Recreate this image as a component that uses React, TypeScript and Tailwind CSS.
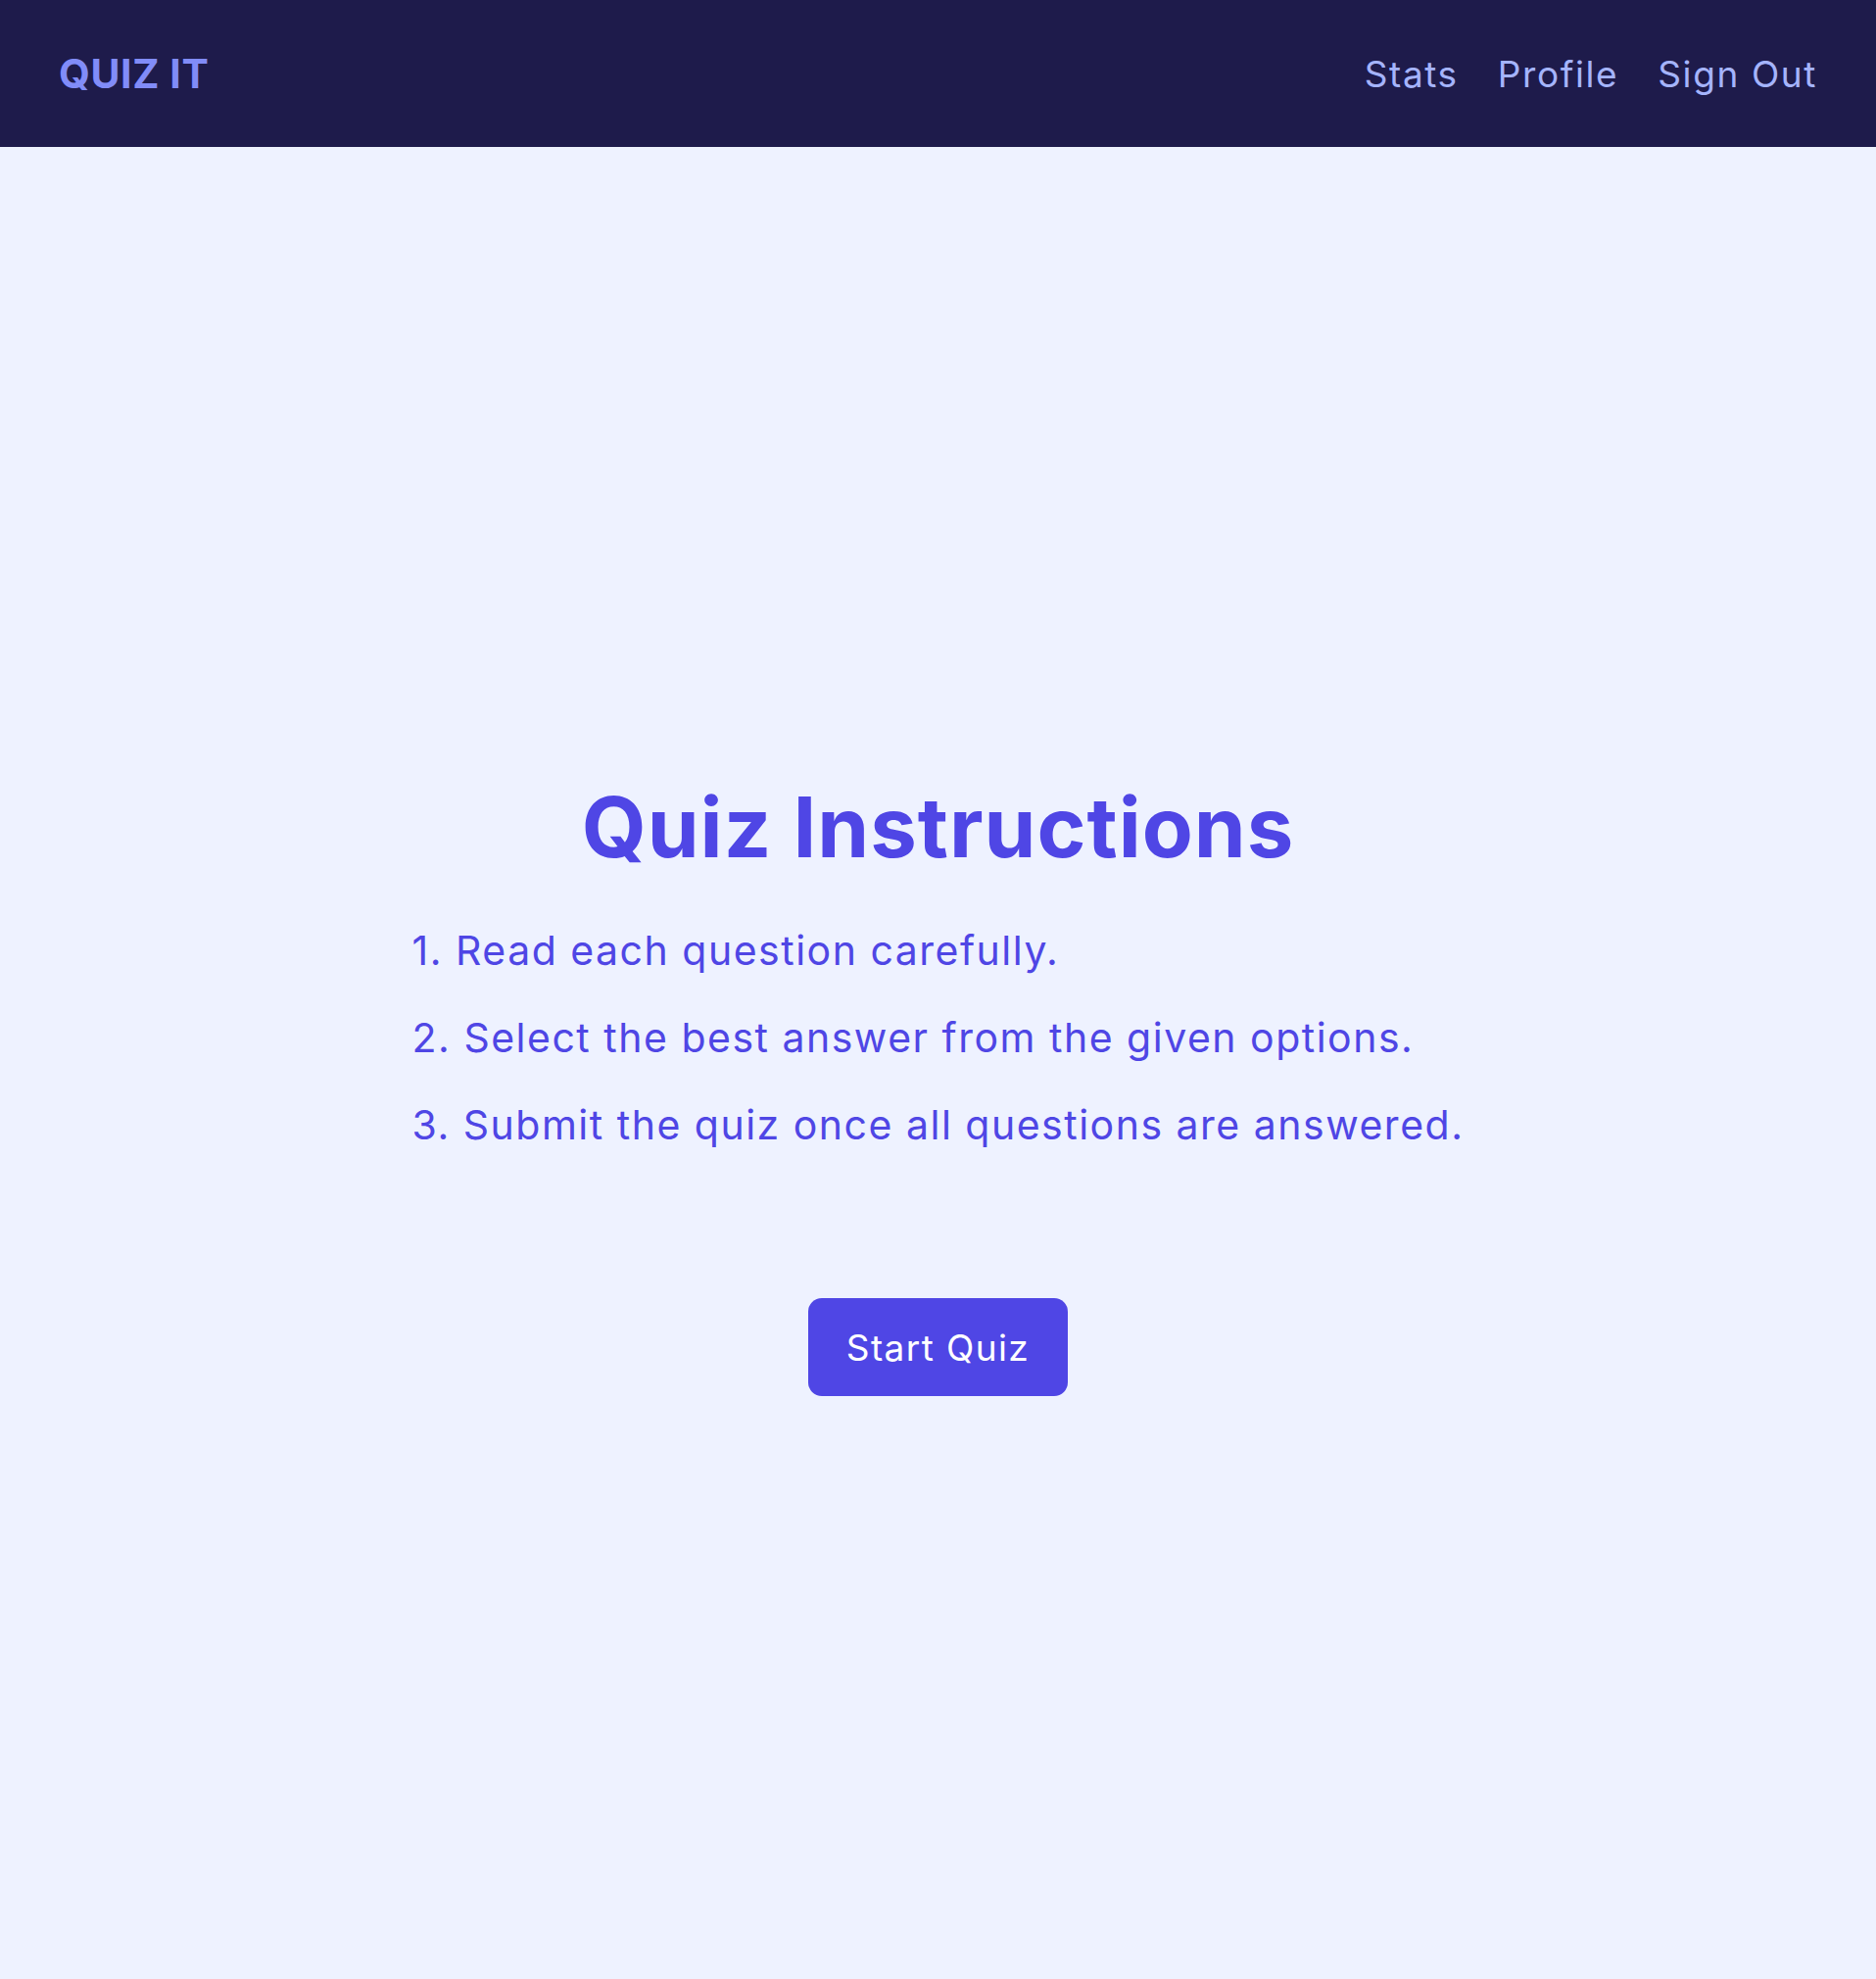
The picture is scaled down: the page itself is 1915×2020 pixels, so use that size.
export default function App() {
  const steps = [
    "1. Read each question carefully.",
    "2. Select the best answer from the given options.",
    "3. Submit the quiz once all questions are answered.",
  ]

  return (
    <div className="min-h-screen bg-[#eef2ff] font-['Inter',sans-serif]">
      <header className="h-[150px] bg-[#1e1b4b] px-[60px] flex items-center justify-between">
        <div className="text-[41px] leading-none font-bold tracking-[0.6px] text-[#818cf8]">QUIZ IT</div>
        <nav className="flex items-center gap-[40px] text-[37px] leading-none tracking-[1.6px] text-[#a5b4fc]">
          <a href="#">Stats</a>
          <a href="#">Profile</a>
          <a href="#">Sign Out</a>
        </nav>
      </header>

      <main className="flex flex-col items-center pt-[652px]">
        <h1 className="text-[85px] leading-none font-bold tracking-[1px] text-[#4f46e5]">Quiz Instructions</h1>
        <ol className="mt-[63px] flex flex-col gap-[48px] text-[41px] leading-[41px] tracking-[1.5px] text-[#4f46e5]">
          {steps.map((s) => (
            <li key={s}>{s}</li>
          ))}
        </ol>
        <button className="mt-[156px] h-[100px] w-[265px] rounded-[14px] bg-[#4f46e5] text-white text-[37px] leading-none tracking-[1.4px]">
          Start Quiz
        </button>
      </main>
    </div>
  )
}
